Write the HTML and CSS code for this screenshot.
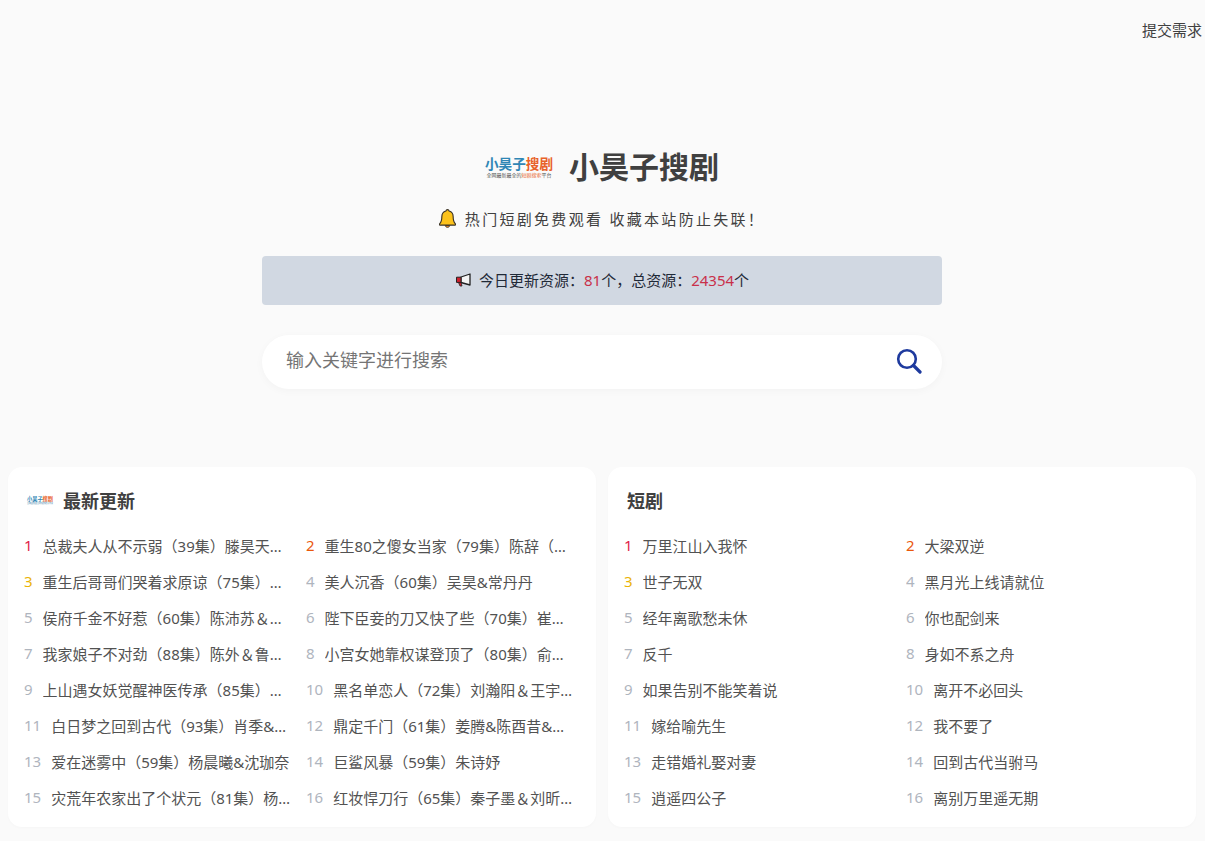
FILE: index.html
```html
<!DOCTYPE html>
<html lang="zh-CN">
<head>
  <meta charset="UTF-8">
  <title>小昊子搜剧</title>
  <meta name="viewport" content="width=device-width,initial-scale=1">
  <link rel="stylesheet" href="styles.css">
</head>
<body>
  <div class="top-bar"><a class="top-link" href="#">提交需求</a></div>

  <header class="hero">
    <div class="brand">
      <div class="logo">
        <div class="logo-name"><span class="logo-blue">小昊子</span><span class="logo-orange">搜剧</span></div>
        <div class="logo-sub">全网最新最全的<span class="logo-orange">短剧搜索</span>平台</div>
      </div>
      <h1 class="brand-title">小昊子搜剧</h1>
    </div>
    <p class="slogan">
      <svg class="bell" viewBox="1.500 .7 15 16.600" width="17" height="19">
        <path d="M9 1.200c-.8 0-1.300.5-1.400 1.200C5.300 3 4 5 4 7.500c0 3.500-.6 5-2 6.300-.4.400-.2 1 .4 1h13.200c.6 0 .8-.6.400-1-1.400-1.300-2-2.800-2-6.300 0-2.500-1.300-4.500-3.600-5.100C10.300 1.700 9.800 1.200 9 1.200z" fill="#fcc21b" stroke="#3a3226" stroke-width="1"/>
        <path d="M7 15.200c.2 1 1 1.600 2 1.600s1.800-.6 2-1.600z" fill="#f79329" stroke="#3a3226" stroke-width=".8"/>
      </svg>
      <span>热门短剧免费观看 收藏本站防止失联！</span>
    </p>
    <div class="notice">
      <svg class="horn" viewBox="0 0 18 14" width="18" height="14">
        <path d="M6 4 15 1v11L6 9.500z" fill="#f4f4f4" stroke="#222" stroke-width="1.300" stroke-linejoin="round"/>
        <path d="M1.500 4.200H6v5.200H1.500z" fill="#d0202e" stroke="#222" stroke-width="1"/>
        <path d="M3.500 9.500 5 13h2L6 9.500z" fill="#d0202e" stroke="#222" stroke-width=".8"/>
      </svg>
      <span>今日更新资源：<em>81</em>个，总资源：<em>24354</em>个</span>
    </div>
    <form class="search">
      <input class="search-input" placeholder="输入关键字进行搜索" autocomplete="off">
      <svg class="search-icon" viewBox="0 0 26 26" width="26" height="26">
        <circle cx="11" cy="11" r="8.800" fill="none" stroke="#1e3a9e" stroke-width="2.600"/>
        <path d="M17.500 17.500 24 24" fill="none" stroke="#1e3a9e" stroke-width="3.200" stroke-linecap="round"/>
      </svg>
    </form>
  </header>

  <main class="boards">
    <section class="card">
      <h2 class="card-head">
        <div class="logo logo-small">
          <div class="logo-name"><span class="logo-blue">小昊子</span><span class="logo-orange">搜剧</span></div>
          <div class="logo-sub">全网最新最全的短剧搜索平台</div>
        </div>
        <span>最新更新</span>
      </h2>
      <ol class="rank-list">
        <li><i class="top1">1</i><a>总裁夫人从不示弱（39集）滕昊天&amp;姜十七</a></li>
        <li><i class="top2">2</i><a>重生80之傻女当家（79集）陈辞（辞辞）&amp;李柯以</a></li>
        <li><i class="top3">3</i><a>重生后哥哥们哭着求原谅（75集）孙樾&amp;王格格</a></li>
        <li><i>4</i><a>美人沉香（60集）吴昊&amp;常丹丹</a></li>
        <li><i>5</i><a>侯府千金不好惹（60集）陈沛苏＆李胜楠</a></li>
        <li><i>6</i><a>陛下臣妾的刀又快了些（70集）崔秀子&amp;刘擎</a></li>
        <li><i>7</i><a>我家娘子不对劲（88集）陈外＆鲁诺&amp;王格格</a></li>
        <li><i>8</i><a>小宫女她靠权谋登顶了（80集）俞逸&amp;张震</a></li>
        <li><i>9</i><a>上山遇女妖觉醒神医传承（85集）赵弈钦&amp;王格格</a></li>
        <li><i>10</i><a>黑名单恋人（72集）刘瀚阳＆王宇涵&amp;李柯以</a></li>
        <li><i>11</i><a>白日梦之回到古代（93集）肖季&amp;夏一瑶</a></li>
        <li><i>12</i><a>鼎定千门（61集）姜腾&amp;陈酉昔&amp;李柯以</a></li>
        <li><i>13</i><a>爱在迷雾中（59集）杨晨曦&amp;沈珈奈</a></li>
        <li><i>14</i><a>巨鲨风暴（59集）朱诗妤</a></li>
        <li><i>15</i><a>灾荒年农家出了个状元（81集）杨咩咩&amp;王格格</a></li>
        <li><i>16</i><a>红妆悍刀行（65集）秦子墨＆刘昕宇&amp;王格格</a></li>
      </ol>
    </section>
    <section class="card">
      <h2 class="card-head"><span>短剧</span></h2>
      <ol class="rank-list">
        <li><i class="top1">1</i><a>万里江山入我怀</a></li>
        <li><i class="top2">2</i><a>大梁双逆</a></li>
        <li><i class="top3">3</i><a>世子无双</a></li>
        <li><i>4</i><a>黑月光上线请就位</a></li>
        <li><i>5</i><a>经年离歌愁未休</a></li>
        <li><i>6</i><a>你也配剑来</a></li>
        <li><i>7</i><a>反千</a></li>
        <li><i>8</i><a>身如不系之舟</a></li>
        <li><i>9</i><a>如果告别不能笑着说</a></li>
        <li><i>10</i><a>离开不必回头</a></li>
        <li><i>11</i><a>嫁给喻先生</a></li>
        <li><i>12</i><a>我不要了</a></li>
        <li><i>13</i><a>走错婚礼娶对妻</a></li>
        <li><i>14</i><a>回到古代当驸马</a></li>
        <li><i>15</i><a>逍遥四公子</a></li>
        <li><i>16</i><a>离别万里遥无期</a></li>
      </ol>
    </section>
  </main>
</body>
</html>
```

FILE: styles.css
```css
* { box-sizing: border-box; }
html, body {
  margin: 0;
  padding: 0;
}
body {
  height: 841px;
  overflow: hidden;
  background: #fafafa;
  color: #404040;
  font-family: "Noto Sans", "Noto Sans CJK SC", sans-serif;
  font-size: 15px;
}

.top-bar {
  display: flex;
  justify-content: flex-end;
  padding: 19px 3px 0 0;
  height: 149px;
}
.top-link {
  color: #404040;
  font-size: 15px;
  line-height: 22px;
  text-decoration: none;
}

/* cabecera */
.hero {
  display: flex;
  flex-direction: column;
  align-items: center;
  padding-right: 1px;
}
.brand {
  display: flex;
  align-items: center;
  gap: 16px;
  height: 36px;
}
.brand-title {
  margin: 0;
  font-size: 30px;
  line-height: 36px;
  font-weight: 700;
  color: #404040;
}
.logo {
  width: 68px;
  text-align: center;
  white-space: nowrap;
}
.logo-name {
  font-size: 13.600px;
  line-height: 16px;
  font-weight: 700;
}
.logo-sub {
  font-size: 5px;
  line-height: 7px;
  color: #555;
}
.logo-blue { color: #2f86b5; }
.logo-orange { color: #e8622a; }
.logo-small {
  width: 26px;
}
.logo-small .logo-name {
  font-size: 5.200px;
  line-height: 6px;
}
.logo-small .logo-sub {
  font-size: 2px;
  line-height: 3px;
  color: #7aa9c4;
}

.slogan {
  display: flex;
  align-items: center;
  gap: 9px;
  margin: 22px 0 0;
  height: 22px;
  font-size: 15px;
  letter-spacing: 2.300px;
  color: #404040;
}
.bell { flex: none; }

.notice {
  display: flex;
  align-items: center;
  justify-content: center;
  gap: 6px;
  width: 680px;
  height: 49px;
  margin-top: 27px;
  padding-bottom: 2px;
  background: #d1d8e2;
  border-radius: 4px;
  font-size: 15px;
  color: #1f2937;
}
.notice em {
  font-style: normal;
  color: #c9304a;
}

.search {
  display: flex;
  align-items: center;
  width: 680px;
  height: 54px;
  margin-top: 30px;
  padding: 0 20px 2px 24px;
  background: #fff;
  border-radius: 27px;
  box-shadow: 0 2px 8px rgba(0, 0, 0, .03);
}
.search-input {
  flex: 1;
  padding: 0 0 2px;
  border: none;
  outline: none;
  background: transparent;
  font-family: inherit;
  font-size: 18px;
  color: #404040;
}
.search-input::placeholder { color: #757575; }

/* listas */
.boards {
  display: grid;
  grid-template-columns: 588px 588px;
  gap: 12px;
  margin: 78px 0 0 8px;
}
.card {
  height: 360px;
  padding: 16px 16px 0;
  background: #fff;
  border-radius: 14px;
  box-shadow: 0 1px 3px rgba(0, 0, 0, .02);
}
.card-head {
  display: flex;
  align-items: center;
  gap: 10px;
  height: 36px;
  margin: 0 0 9px;
  padding: 0 0 2px 3px;
  font-size: 18px;
  font-weight: 700;
  color: #404040;
}
.rank-list {
  display: grid;
  grid-template-columns: 282px 282px;
  grid-auto-rows: 36px;
  margin: 0;
  padding: 0;
  list-style: none;
}
.rank-list li {
  display: flex;
  align-items: center;
  gap: 10px;
  padding: 0 14px 2px 0;
  min-width: 0;
  font-size: 15px;
  color: #525252;
}
.rank-list i {
  flex: none;
  font-style: normal;
  color: #9ca3af;
  opacity: .8;
}
.rank-list i.top1 { color: #e11d48; opacity: 1; }
.rank-list i.top2 { color: #ea580c; opacity: 1; }
.rank-list i.top3 { color: #eab308; opacity: 1; }
.rank-list a {
  flex: 1;
  min-width: 0;
  overflow: hidden;
  white-space: nowrap;
  text-overflow: ellipsis;
}
```
